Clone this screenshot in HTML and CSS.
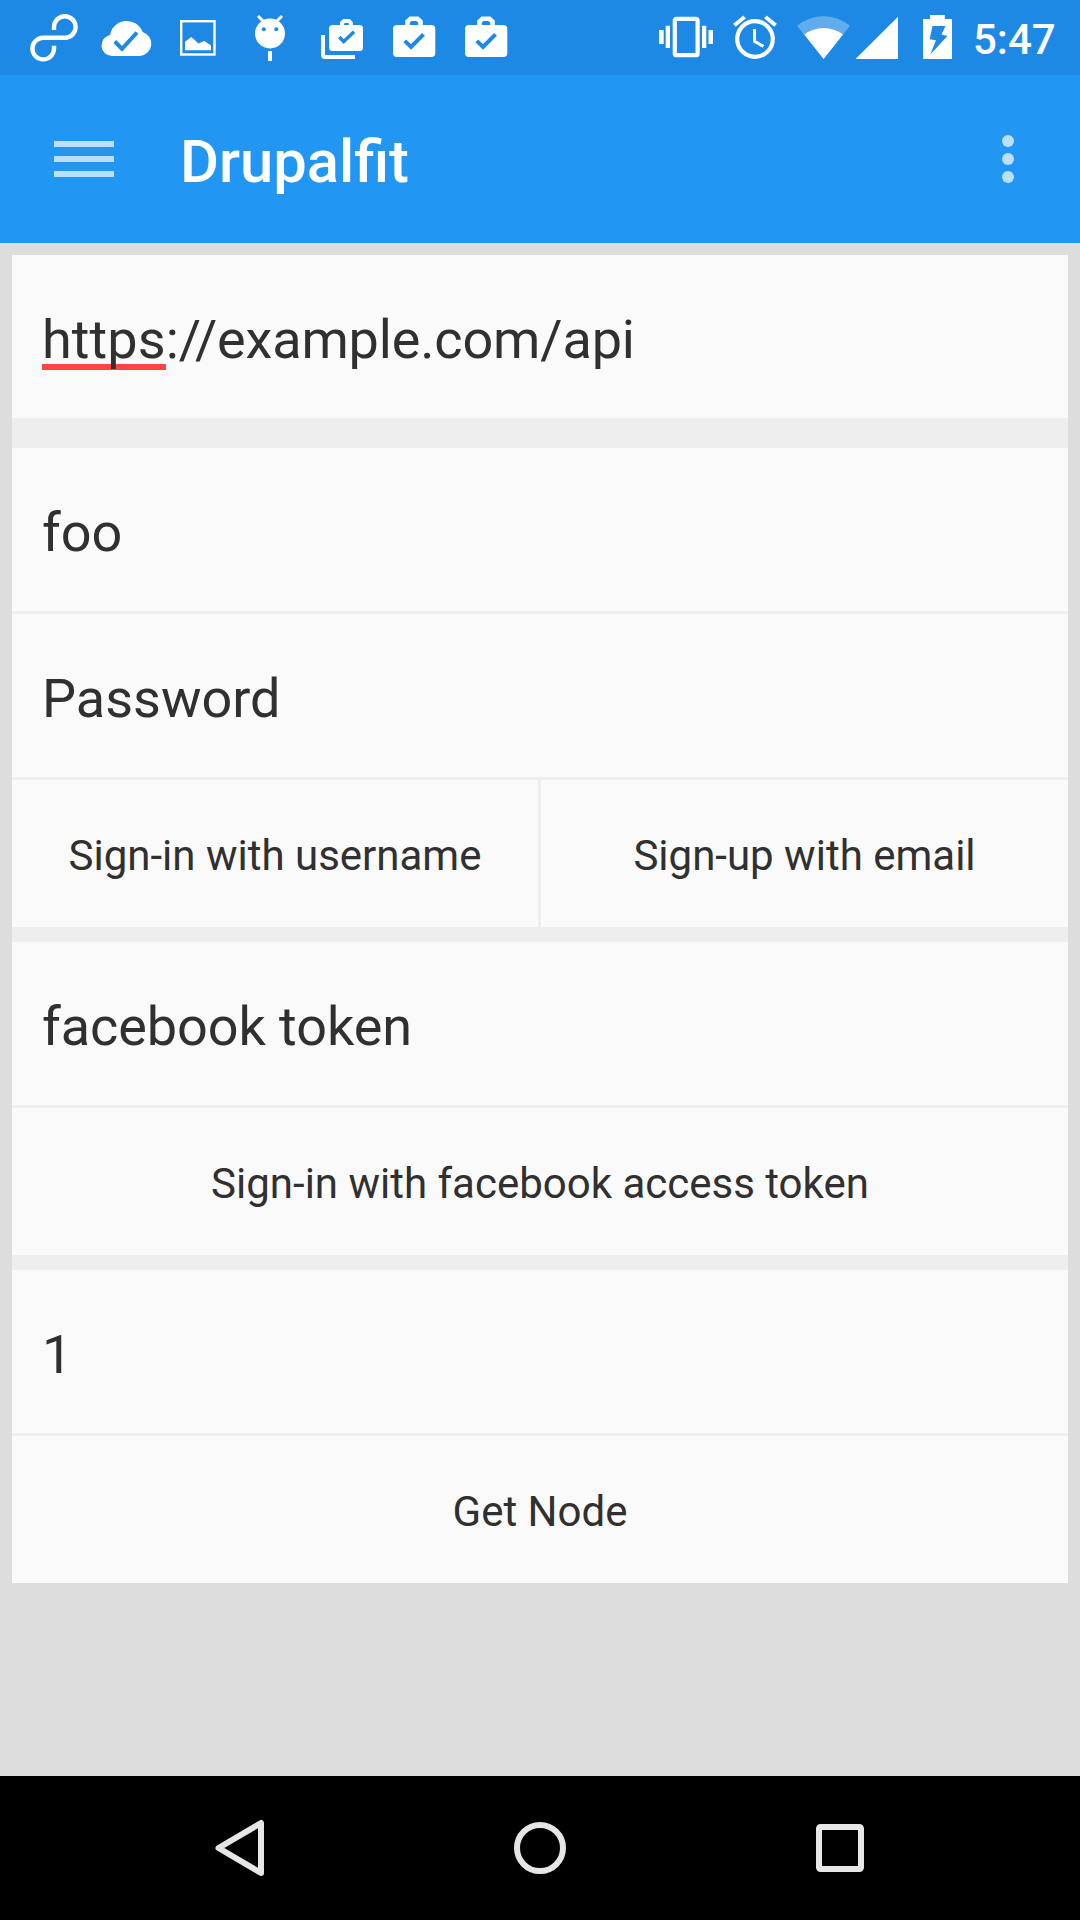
FILE: index.html
```html
<!DOCTYPE html>
<html lang="en">
<head>
<meta charset="utf-8">
<title>Drupalfit</title>
<link rel="stylesheet" href="styles.css">
</head>
<body>
<div class="screen">
  <header class="status-bar">
    <div class="notifications">
      <svg class="slot" viewBox="18 0 72 75"><path class="line" d="M54 30V27A10.8 10.8 0 1 1 64.8 37.8H43.2A10.8 10.8 0 1 0 54 48.6V45.7" stroke-width="4.4"/></svg>
      <svg class="slot" viewBox="90 0 72 75"><path d="M112 56A10.6 10.6 0 0 1 110 35A17 17 0 0 1 142.7 32A12.3 12.3 0 0 1 140 56Z"/><path class="cut" d="M114.8 41.5L122 48.8L137 32.5" stroke-width="4"/></svg>
      <svg class="slot" viewBox="162 0 72 75"><rect class="line" x="181.2" y="21.2" width="33.3" height="33.3" stroke-width="2.4"/><path d="M185 41.7L191.3 37L198.5 43.5L204.3 41L211 45.5V50.3H185Z"/></svg>
      <svg class="slot" viewBox="234 0 72 75"><circle cx="270" cy="33.5" r="15"/><path class="line" d="M258 16L264 22M282 16L276 22" stroke-width="3"/><path d="M268 51H272V61H268Z"/><circle class="hole" cx="263.8" cy="29.2" r="2"/><circle class="hole" cx="276.3" cy="29.2" r="2"/></svg>
      <svg class="slot" viewBox="306 0 72 75"><path class="line" d="M323 35V55Q323 57 325 57H355" stroke-width="4"/><rect x="329" y="25" width="34" height="26" rx="3.5"/><path class="line" d="M342 26V23L344 21H349L350.8 23V26" stroke-width="4"/><path class="cut" d="M339.3 37L343.7 41.6L354 31.8" stroke-width="3.4"/></svg>
      <svg class="slot" viewBox="378 0 72 75"><rect x="393" y="25" width="42.3" height="32" rx="4"/><path class="line" d="M407.5 26V21.5L410.5 18.7H417.5L420.5 21.5V26" stroke-width="4.6"/><path class="cut" d="M404.8 40.8L411 47L423.5 34.3" stroke-width="4"/></svg>
      <svg class="slot" viewBox="450 0 72 75"><rect x="465" y="25" width="42.3" height="32" rx="4"/><path class="line" d="M479.5 26V21.5L482.5 18.7H489.5L492.5 21.5V26" stroke-width="4.6"/><path class="cut" d="M476.8 40.8L483 47L495.5 34.3" stroke-width="4"/></svg>
    </div>
    <div class="system">
      <svg class="vibrate" viewBox="650 0 72 75"><rect class="line" x="674.8" y="18.8" width="22.8" height="36.4" rx="1.8" stroke-width="4.2"/><path d="M665.7 25.7H670V48H665.7ZM659 30H663.7V44H659ZM702 25.7H706.3V48H702ZM708.5 30H713V44H708.5Z"/></svg>
      <svg class="alarm" viewBox="722 0 66 75"><circle class="line" cx="755" cy="39" r="17.8" stroke-width="4.2"/><path class="line" d="M754.5 29V41.3L763.5 46.4" stroke-width="3"/><path class="line" d="M734.4 25.2L744.6 17M765.4 17L775.6 25.2" stroke-width="4"/></svg>
      <svg class="wifi" viewBox="788 0 64 75"><path class="faded" d="M797 25.7A42 42 0 0 1 850 25.7L823.6 59Z"/><path d="M804.3 34.5A31.7 31.7 0 0 1 843 34.5L823.6 59Z"/></svg>
      <svg class="signal" viewBox="852 0 60 75"><path d="M898 16.7V59H855.5Z"/></svg>
      <svg class="battery" viewBox="912 0 60 75"><path fill-rule="evenodd" d="M923 19H930V15H944.8V19H952V59H923ZM932.5 26L929.7 39.2L936 40.2L930.3 54.5L947.4 36L941.5 34.5L945.5 26Z"/></svg>
      <span class="clock">5:47</span>
    </div>
  </header>

  <nav class="toolbar">
    <svg class="menu-icon" viewBox="0 0 60 36"><path d="M0 0H60V6H0ZM0 15H60V21H0ZM0 30H60V36H0Z"/></svg>
    <h1 class="title">Drupalfit</h1>
    <svg class="more-icon" viewBox="0 0 12 48"><circle cx="6" cy="6" r="6"/><circle cx="6" cy="24" r="6"/><circle cx="6" cy="42" r="6"/></svg>
  </nav>

  <main class="content">
    <section class="group">
      <div class="field url"><span><span class="misspelled">https</span>://example.com/api</span></div>
    </section>
    <section class="group group-login">
      <div class="field">foo</div>
      <div class="field">Password</div>
      <div class="button-row">
        <div class="button">Sign-in with username</div>
        <div class="button">Sign-up with email</div>
      </div>
    </section>
    <section class="group">
      <div class="field token">facebook token</div>
      <div class="button">Sign-in with facebook access token</div>
    </section>
    <section class="group">
      <div class="field">1</div>
      <div class="button">Get Node</div>
    </section>
  </main>

  <footer class="nav-bar">
    <svg class="nav-icon" viewBox="0 0 60 60"><path d="M8.5 30L51 5V55Z"/></svg>
    <svg class="nav-icon" viewBox="0 0 60 60"><circle cx="30" cy="30" r="23"/></svg>
    <svg class="nav-icon" viewBox="0 0 60 60"><rect x="9" y="9" width="42" height="42" rx="1.5"/></svg>
  </footer>
</div>
</body>
</html>
```
FILE: styles.css
```css
* {
  box-sizing: border-box;
}

body {
  margin: 0;
  font-family: Roboto, sans-serif;
  color: #303030;
}

.screen {
  display: flex;
  flex-direction: column;
  width: 1080px;
  height: 1920px;
  background: #ddd;
}

svg {
  display: block;
  flex: none;
}

.status-bar {
  display: flex;
  justify-content: space-between;
  height: 75px;
  padding-left: 18px;
  background: #1e88e5;
  fill: #fff;
}

.notifications,
.system {
  display: flex;
}

.status-bar svg {
  height: 75px;
}

.slot,
.vibrate {
  width: 72px;
}

.alarm {
  width: 66px;
}

.wifi {
  width: 64px;
}

.signal,
.battery {
  width: 60px;
}

.line {
  fill: none;
  stroke: #fff;
}

.cut {
  fill: none;
  stroke: #1e88e5;
}

.hole {
  fill: #1e88e5;
}

.faded {
  fill-opacity: 0.3;
}

.clock {
  width: 108px;
  padding: 4px 0 0 1px;
  font-size: 42px;
  font-weight: 500;
  line-height: 72px;
  color: #fff;
}

.toolbar {
  display: flex;
  align-items: center;
  height: 168px;
  padding: 0 66px 0 54px;
  background: #2196f3;
  fill: rgba(255, 255, 255, 0.7);
}

.menu-icon {
  width: 60px;
  height: 36px;
}

.title {
  flex: 1;
  margin: 0 0 0 66px;
  padding-top: 6px;
  font-size: 59.7px;
  font-weight: 500;
  line-height: 70px;
  color: #fff;
}

.more-icon {
  width: 12px;
  height: 48px;
}

.content {
  display: flex;
  flex: 1;
  flex-direction: column;
  padding: 12px;
}

.group {
  display: flex;
  flex-direction: column;
  gap: 3px;
  background: #eee;
}

.group + .group {
  border-top: 15px solid #eee;
}

.group + .group-login {
  border-top-width: 30px;
}

.field {
  display: flex;
  align-items: center;
  height: 163px;
  padding: 6px 30px 0;
  background: #fafafa;
  font-size: 54px;
}

.url {
  letter-spacing: -0.15px;
}

.token {
  letter-spacing: -0.07px;
}

.misspelled {
  padding-bottom: 1px;
  background: linear-gradient(#ff4444, #ff4444) left 0 bottom 2px / 100% 6px no-repeat;
  letter-spacing: 0.1px;
}

.button-row {
  display: grid;
  grid-template-columns: 526fr 527fr;
  gap: 3px;
}

.button {
  display: flex;
  align-items: center;
  justify-content: center;
  height: 147px;
  padding-top: 3px;
  background: #fafafa;
  font-size: 42px;
}

.nav-bar {
  display: flex;
  align-items: center;
  justify-content: center;
  gap: 240px;
  height: 144px;
  background: #000;
}

.nav-icon {
  width: 60px;
  height: 60px;
  fill: none;
  stroke: #e6e6e6;
  stroke-width: 6;
  stroke-linejoin: round;
}
```
